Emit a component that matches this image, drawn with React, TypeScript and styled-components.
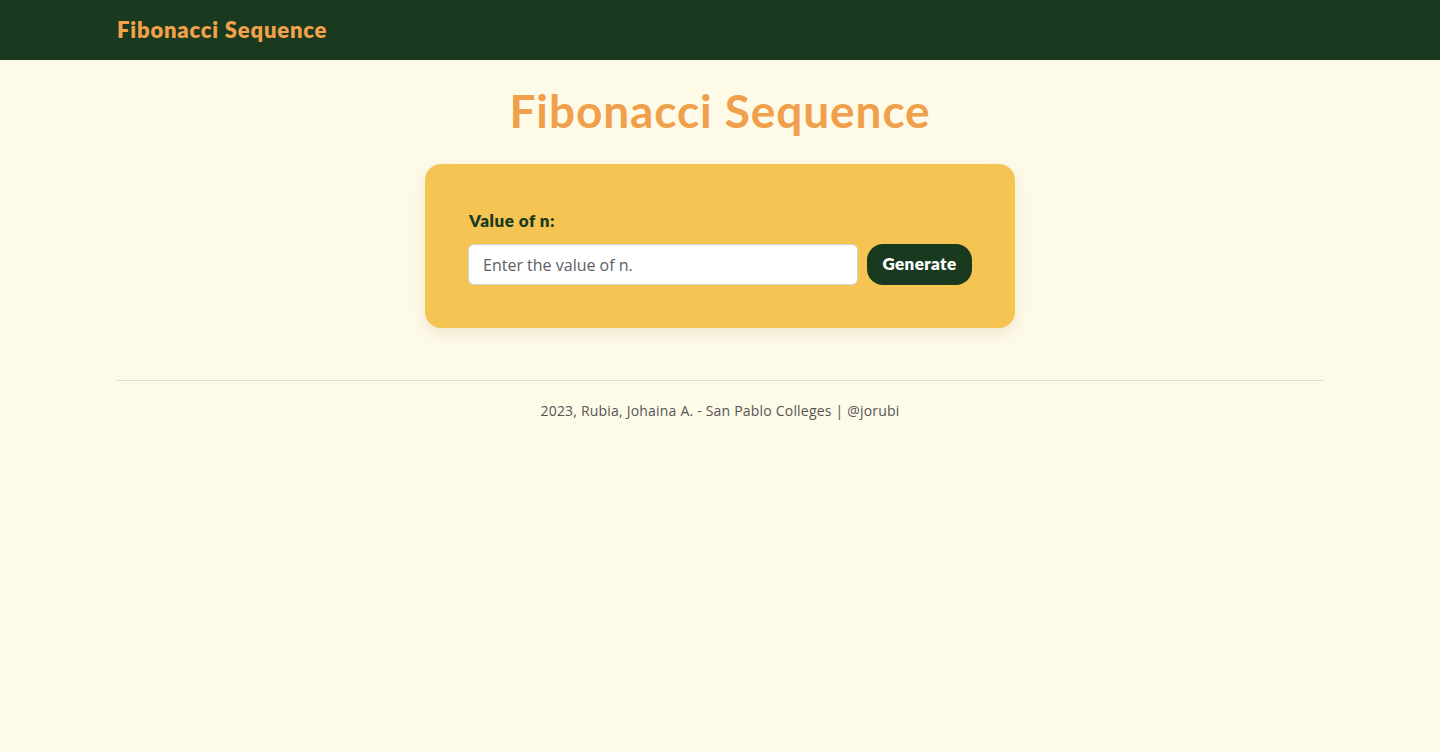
import React from "react";
import styled, { createGlobalStyle } from "styled-components";

const Global = createGlobalStyle`
  html, body { margin: 0; padding: 0; }
  body {
    background: #fefae8;
    font-family: "Open Sans", "Noto Sans", sans-serif;
  }
  * { box-sizing: border-box; }
`;

const Nav = styled.nav`
  height: 60px;
  background: #193a1e;
  display: flex;
  align-items: center;
`;

const Container = styled.div`
  width: 1206px;
  margin: 0 auto;
`;

const Brand = styled.a`
  font-family: Lato, sans-serif;
  font-weight: 800;
  font-size: 22px;
  letter-spacing: 0.8px;
  color: #f2a04a;
  text-decoration: none;
  display: inline-block;
  padding-bottom: 2px;
`;

const Main = styled.main`
  display: flex;
  flex-direction: column;
  align-items: center;
`;

const Title = styled.h1`
  font-family: Lato, sans-serif;
  font-weight: 700;
  font-size: 46px;
  letter-spacing: 0.9px;
  color: #f0a04b;
  margin: 24px 0 26px;
  line-height: 54px;
`;

const Card = styled.form`
  width: 590px;
  background: #f5c453;
  border-radius: 16px;
  padding: 47px 43px 43px;
  box-shadow: 0 6px 16px rgba(120, 100, 40, 0.12);
`;

const Label = styled.label`
  display: block;
  font-family: Lato, sans-serif;
  font-weight: 800;
  font-size: 17px;
  letter-spacing: 0.5px;
  color: #193a1e;
  margin: 0 0 13px 1px;
  line-height: 20px;
`;

const Row = styled.div`
  display: flex;
  gap: 9px;
  align-items: center;
`;

const Input = styled.input`
  flex: 1;
  height: 41px;
  border: 1px solid #ced4da;
  border-radius: 6px;
  background: #fff;
  padding: 0 14px;
  font-family: "Open Sans", "Noto Sans", sans-serif;
  font-size: 16px;
  color: #333;
  outline: none;
  &::placeholder { color: #5c6066; }
`;

const Button = styled.button`
  height: 41px;
  width: 105px;
  border: none;
  border-radius: 16px;
  background: #193a1e;
  color: #fff;
  font-family: Lato, sans-serif;
  font-weight: 800;
  font-size: 17px;
  letter-spacing: 0.4px;
  cursor: pointer;
  padding: 0 0 3px;
`;

const Footer = styled.footer`
  margin-top: 52px;
`;

const Rule = styled.hr`
  border: none;
  border-top: 1px solid #dcdcd6;
  margin: 0;
`;

const Credit = styled.p`
  text-align: center;
  font-size: 14px;
  letter-spacing: 0.2px;
  color: #555;
  margin: 20px 0 0;
`;

export default function App() {
  return (
    <>
      <Global />
      <Nav>
        <Container>
          <Brand href="#">Fibonacci Sequence</Brand>
        </Container>
      </Nav>
      <Main>
        <Title>Fibonacci Sequence</Title>
        <Card onSubmit={(e) => e.preventDefault()}>
          <Label htmlFor="n">Value of n:</Label>
          <Row>
            <Input id="n" type="text" placeholder="Enter the value of n." />
            <Button type="submit">Generate</Button>
          </Row>
        </Card>
      </Main>
      <Footer>
        <Container>
          <Rule />
          <Credit>2023, Rubia, Johaina A. - San Pablo Colleges | @jorubi</Credit>
        </Container>
      </Footer>
    </>
  );
}
